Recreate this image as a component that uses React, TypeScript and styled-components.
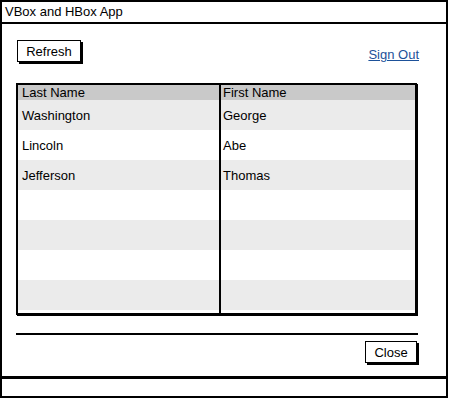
import { FC } from "react";
import styled, { createGlobalStyle } from "styled-components";

const GlobalStyle = createGlobalStyle`
  body {
    margin: 0;
    background: #fff;
    font-family: "Liberation Sans", Arial, sans-serif;
    color: #000;
  }
`;

const Window = styled.div`
  width: 448px;
  height: 398px;
  box-sizing: border-box;
  border: 2px solid #000;
  display: flex;
  flex-direction: column;
`;

const TitleBar = styled.div`
  height: 20px;
  border-bottom: 2px solid #000;
  padding-left: 3px;
  font-size: 13px;
  line-height: 20px;
`;

const Content = styled.div`
  flex: 1;
  padding: 16px 29px 0 14px;
  display: flex;
  flex-direction: column;
`;

const Toolbar = styled.div`
  display: flex;
  justify-content: space-between;
  align-items: flex-end;
  height: 22px;
`;

const Button = styled.button<{ $width: number }>`
  width: ${(p) => p.$width}px;
  height: 22px;
  margin-left: 1px;
  box-sizing: border-box;
  border: 1px solid #000;
  box-shadow: 2px 2px 0 #000;
  background: #fff;
  font-family: "Liberation Sans", Arial, sans-serif;
  font-size: 13px;
  padding: 0;
  color: #000;
`;

const SignOut = styled.a`
  color: #1d5199;
  font-size: 13px;
  text-decoration: underline;
  margin-right: -2px;
  margin-bottom: 0;
`;

const Table = styled.div`
  margin-top: 21px;
  height: 232px;
  box-sizing: border-box;
  border: 2px solid #000;
  box-shadow: 1px 1px 0 #000;
  display: grid;
  grid-template-columns: 201px 2px 1fr;
  grid-template-rows: 15px repeat(7, 30px) 1fr;
`;

const Cell = styled.div<{ $shade: "head" | "odd" | "even"; $indent: number }>`
  background: ${(p) =>
    p.$shade === "head" ? "#c9c9c9" : p.$shade === "odd" ? "#ebebeb" : "#fff"};
  font-size: 13px;
  display: flex;
  align-items: center;
  padding-left: ${(p) => p.$indent}px;
  white-space: nowrap;
`;

const Divider = styled.div`
  grid-column: 2;
  grid-row: 1 / -1;
  background: #000;
`;

const Separator = styled.div`
  margin-top: 18px;
  border-top: 2px solid #000;
  margin-right: -1px;
`;

const Footer = styled.div`
  display: flex;
  justify-content: flex-end;
  margin-top: 6px;
`;

const StatusBar = styled.div`
  height: 17px;
  border-top: 3px solid #000;
`;

const rows = [
  ["Washington", "George"],
  ["Lincoln", "Abe"],
  ["Jefferson", "Thomas"],
  ["", ""],
  ["", ""],
  ["", ""],
  ["", ""],
];

const App: FC = () => {
  return (
    <>
      <GlobalStyle />
      <Window>
        <TitleBar>VBox and HBox App</TitleBar>
        <Content>
          <Toolbar>
            <Button $width={64}>Refresh</Button>
            <SignOut href="#">Sign Out</SignOut>
          </Toolbar>
          <Table>
            <Cell $shade="head" $indent={4} style={{ gridColumn: 1 }}>
              Last Name
            </Cell>
            <Divider />
            <Cell $shade="head" $indent={2} style={{ gridColumn: 3 }}>
              First Name
            </Cell>
            {rows.map(([last, first], i) => {
              const shade = i % 2 === 0 ? "odd" : "even";
              return [
                <Cell key={`l${i}`} $shade={shade} $indent={4} style={{ gridColumn: 1 }}>
                  {last}
                </Cell>,
                <Cell key={`f${i}`} $shade={shade} $indent={2} style={{ gridColumn: 3 }}>
                  {first}
                </Cell>,
              ];
            })}
          </Table>
          <Separator />
          <Footer>
            <Button $width={52}>Close</Button>
          </Footer>
        </Content>
        <StatusBar />
      </Window>
    </>
  );
};

export default App;
